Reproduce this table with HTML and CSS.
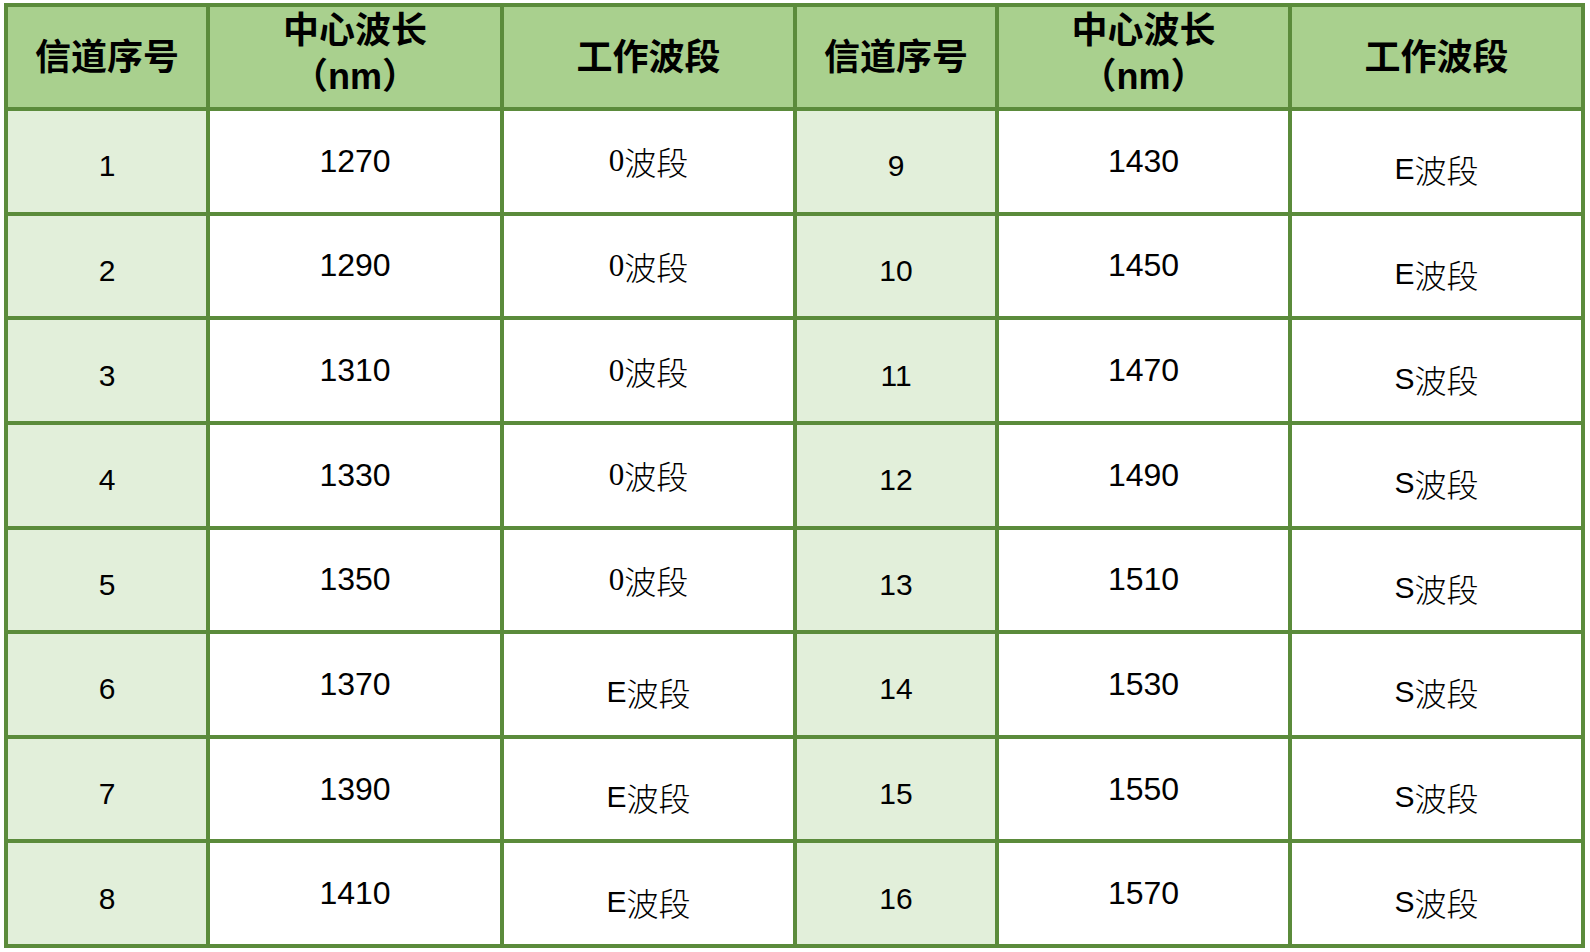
FILE: index.html
```html
<!DOCTYPE html>
<html lang="zh">
<head>
<meta charset="utf-8">
<title>信道波长表</title>
<link rel="stylesheet" href="styles.css">
</head>
<body>
<div class="page">
  <div class="grid">
    <div class="cell head"><span>信道序号</span></div>
    <div class="cell head two"><span>中心波长</span><span>（nm）</span></div>
    <div class="cell head"><span>工作波段</span></div>
    <div class="cell head"><span>信道序号</span></div>
    <div class="cell head two"><span>中心波长</span><span>（nm）</span></div>
    <div class="cell head"><span>工作波段</span></div>

    <div class="cell idx">1</div><div class="cell wl">1270</div><div class="cell band o"><span class="o-num">0</span><span class="zh">波段</span></div>
    <div class="cell idx">9</div><div class="cell wl">1430</div><div class="cell band low"><span class="lat">E</span><span class="zh">波段</span></div>

    <div class="cell idx">2</div><div class="cell wl">1290</div><div class="cell band o"><span class="o-num">0</span><span class="zh">波段</span></div>
    <div class="cell idx">10</div><div class="cell wl">1450</div><div class="cell band low"><span class="lat">E</span><span class="zh">波段</span></div>

    <div class="cell idx">3</div><div class="cell wl">1310</div><div class="cell band o"><span class="o-num">0</span><span class="zh">波段</span></div>
    <div class="cell idx">11</div><div class="cell wl">1470</div><div class="cell band low"><span class="lat">S</span><span class="zh">波段</span></div>

    <div class="cell idx">4</div><div class="cell wl">1330</div><div class="cell band o"><span class="o-num">0</span><span class="zh">波段</span></div>
    <div class="cell idx">12</div><div class="cell wl">1490</div><div class="cell band low"><span class="lat">S</span><span class="zh">波段</span></div>

    <div class="cell idx">5</div><div class="cell wl">1350</div><div class="cell band o"><span class="o-num">0</span><span class="zh">波段</span></div>
    <div class="cell idx">13</div><div class="cell wl">1510</div><div class="cell band low"><span class="lat">S</span><span class="zh">波段</span></div>

    <div class="cell idx">6</div><div class="cell wl">1370</div><div class="cell band low"><span class="lat">E</span><span class="zh">波段</span></div>
    <div class="cell idx">14</div><div class="cell wl">1530</div><div class="cell band low"><span class="lat">S</span><span class="zh">波段</span></div>

    <div class="cell idx">7</div><div class="cell wl">1390</div><div class="cell band low"><span class="lat">E</span><span class="zh">波段</span></div>
    <div class="cell idx">15</div><div class="cell wl">1550</div><div class="cell band low"><span class="lat">S</span><span class="zh">波段</span></div>

    <div class="cell idx">8</div><div class="cell wl">1410</div><div class="cell band low"><span class="lat">E</span><span class="zh">波段</span></div>
    <div class="cell idx">16</div><div class="cell wl">1570</div><div class="cell band low"><span class="lat">S</span><span class="zh">波段</span></div>
  </div>
</div>
</body>
</html>
```

FILE: styles.css
```css
html, body {
  margin: 0;
  padding: 0;
  background: #ffffff;
}

.page {
  padding: 3px 0 0 4px;
}

.grid {
  display: grid;
  grid-template-columns: 198px 290px 289px 198px 289px 289px;
  grid-template-rows: 100px repeat(8, 1fr);
  gap: 4px;
  padding: 4px;
  width: 1581px;
  height: 945px;
  box-sizing: border-box;
  background: #5b8b3b;
}

.cell {
  display: flex;
  align-items: center;
  justify-content: center;
  background: #ffffff;
  color: #000000;
  box-sizing: border-box;
  font-family: "Liberation Sans", Arial, sans-serif;
}

.head {
  background: #a9d08e;
  flex-direction: column;
  font-family: "Liberation Sans", "Noto Sans CJK SC", sans-serif;
  font-weight: 700;
  font-size: 36px;
  line-height: 46px;
  padding-top: 2px;
}

.head.two {
  padding-top: 0;
  padding-bottom: 6px;
}

.idx {
  background: #e2efda;
  font-size: 30px;
  padding-top: 10px;
}

.wl {
  font-size: 32px;
}

.band {
  font-size: 30px;
}

.band.low {
  padding-top: 16px;
}

.band.o {
  padding-top: 0;
}

.o-num {
  font-family: "Liberation Serif", "Times New Roman", serif;
  font-size: 31px;
}

.lat {
  font-family: "Liberation Sans", Arial, sans-serif;
  font-size: 30px;
}

.zh {
  font-family: "Noto Sans CJK SC", sans-serif;
  font-weight: 300;
  font-size: 32px;
}
```
